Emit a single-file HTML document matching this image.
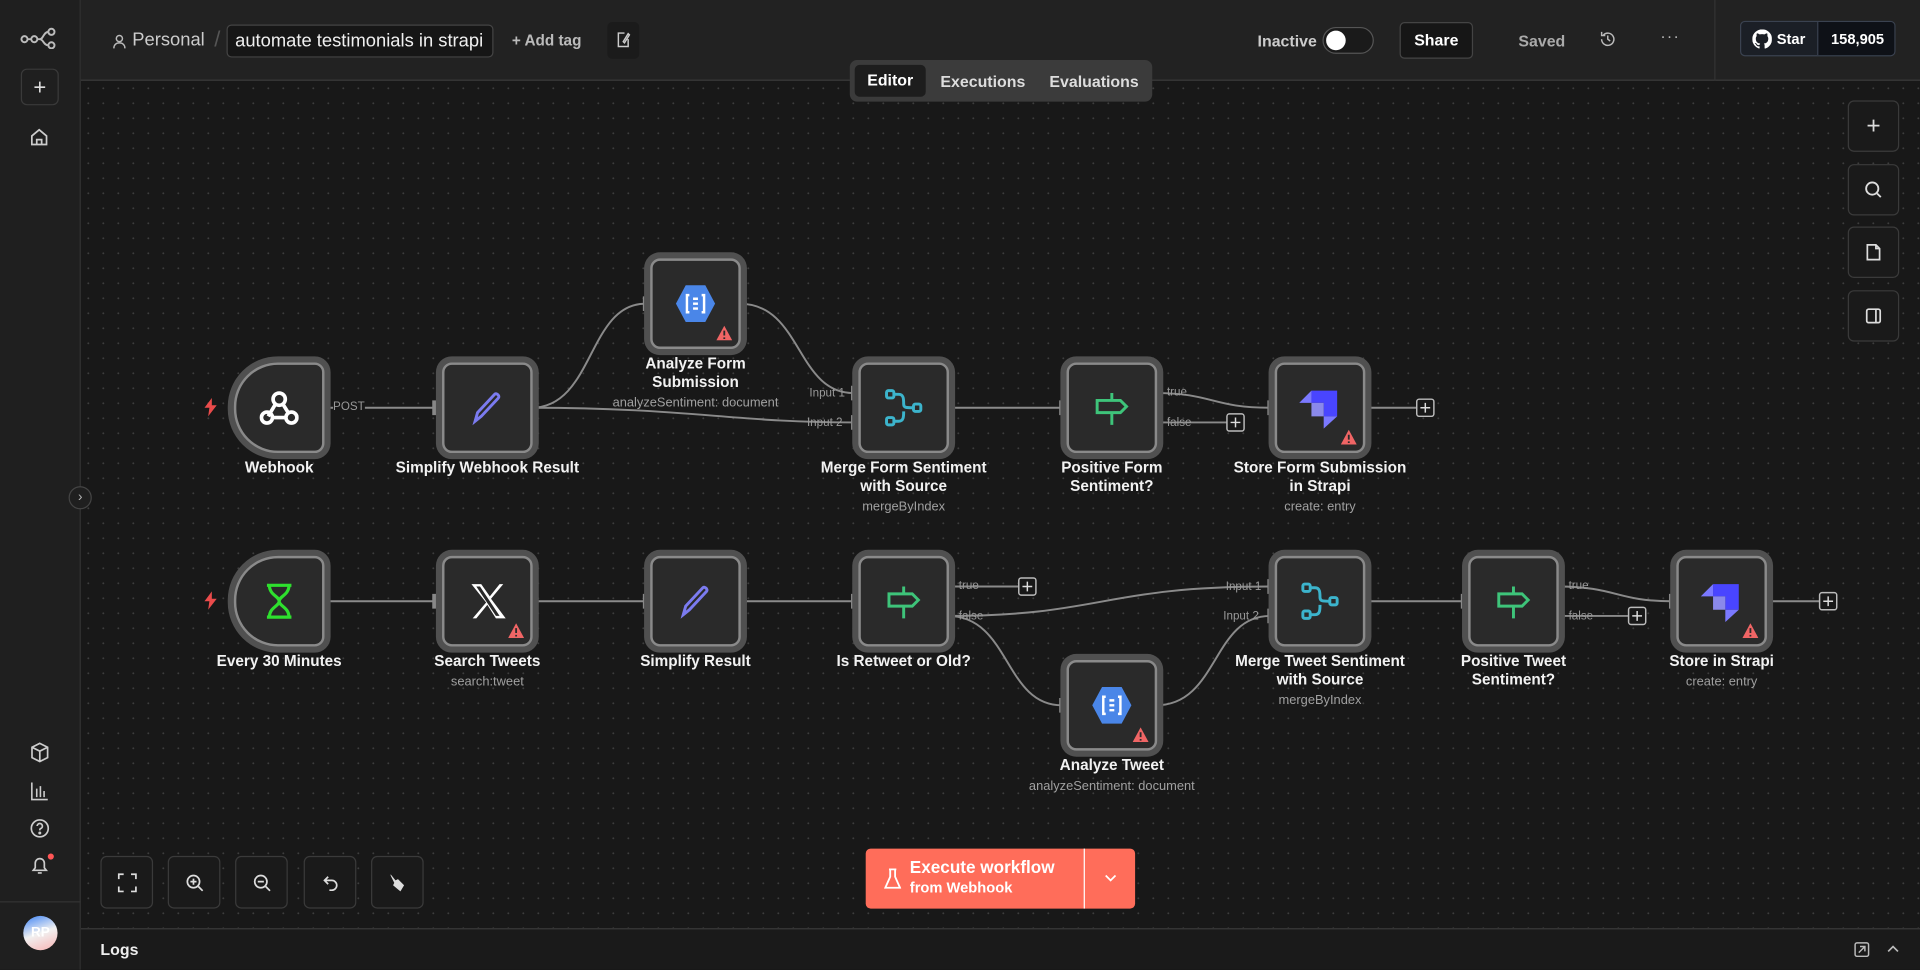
<!DOCTYPE html>
<html><head><meta charset="utf-8"><style>
*{box-sizing:border-box;margin:0;padding:0}
html,body{width:1920px;height:970px;overflow:hidden;background:#181818;font-family:"Liberation Sans",sans-serif}
#w{position:absolute;left:0;top:0;width:1568px;height:792px;transform:scale(1.22449);transform-origin:0 0;background:#181818;overflow:hidden}
.abs{position:absolute}
#side{left:0;top:0;width:66px;height:792px;background:#1f1f1f;border-right:1px solid #333}
#hdr{left:66px;top:0;width:1502px;height:66px;background:#222;border-bottom:1px solid #3a3a3a}
#canvas{left:66px;top:66px;width:1502px;height:692px;background-color:#181818;background-image:radial-gradient(circle,#3d3d3d 0.7px,transparent 0.9px);background-size:12.25px 12.25px}
.node{position:absolute;width:74px;height:74px;background:#2a2a2a;border:2px solid #8a8a8a;border-radius:8px;box-shadow:0 0 0 5px #505050;display:flex;align-items:center;justify-content:center}
.trig{border-radius:36px 8px 8px 36px}
.lbl{position:absolute;width:220px;text-align:center;color:#f2f2f2;font-weight:bold;font-size:12.5px;line-height:15px}
.sub{display:block;font-weight:normal;color:#a0a0a0;font-size:10.5px;margin-top:2px}
.warn{position:absolute;right:5px;bottom:5px}
.btn{position:absolute;border:1px solid #3a3a3a;border-radius:5px;background:#1a1a1a;display:flex;align-items:center;justify-content:center}
.t{color:#ddd;font-size:14px}
</style></head><body><div id="w">
<div id="canvas" class="abs"></div>
<div id="side" class="abs">
 <svg class="abs" style="left:16px;top:22px" width="32" height="18" viewBox="0 0 32 18"><g fill="none" stroke="#bbb" stroke-width="1.6"><circle cx="4" cy="10" r="2.5"/><circle cx="12" cy="10" r="2.5"/><circle cx="26" cy="4" r="2.5"/><circle cx="26" cy="15" r="2.5"/><path d="M6.5 10h3M14.5 10h2c3 0 3-6 7-6M16.5 10c3 0 3 5 7 5"/></g></svg>
 <div class="btn" style="left:17px;top:56px;width:31px;height:30px;background:#1f1f1f"><span style="color:#ddd;font-size:18px">+</span></div>
 <svg class="abs" style="left:24px;top:104px" width="16" height="16" viewBox="0 0 16 16" fill="none" stroke="#ccc" stroke-width="1.4"><path d="M2 7l6-5 6 5v7H2z M6 14v-4h4v4"/></svg>
 <svg class="abs" style="left:24px;top:606px" width="17" height="17" viewBox="0 0 16 16" fill="none" stroke="#ccc" stroke-width="1.3"><path d="M8 1l6 3v8l-6 3-6-3V4z M2 4l6 3 6-3 M8 7v8"/></svg>
 <svg class="abs" style="left:24px;top:638px" width="16" height="16" viewBox="0 0 16 16" fill="none" stroke="#ccc" stroke-width="1.3"><path d="M2 1v14h13 M6 13V6 M9 13V4 M12 13V8"/></svg>
 <svg class="abs" style="left:24px;top:668px" width="17" height="17" viewBox="0 0 16 16" fill="none" stroke="#ccc" stroke-width="1.3"><circle cx="8" cy="8" r="6.5"/><path d="M6 6.2a2 2 0 1 1 2.5 2c-.5.2-.5.6-.5 1.3"/><circle cx="8" cy="11.6" r=".5" fill="#ccc"/></svg>
 <svg class="abs" style="left:24px;top:698px" width="17" height="17" viewBox="0 0 16 16" fill="none" stroke="#ccc" stroke-width="1.3"><path d="M3 12h10l-1.5-2V6.5a3.5 3.5 0 0 0-7 0V10z M6.5 14h3"/></svg>
 <div class="abs" style="left:39px;top:697px;width:5px;height:5px;border-radius:50%;background:#f55"></div>
 <div class="abs" style="left:0;top:736px;width:66px;height:1px;background:#333"></div>
 <div class="abs" style="left:19px;top:748px;width:28px;height:28px;border-radius:50%;background:linear-gradient(160deg,#3b82f6,#f1f1f1 50%,#f8b4b4);color:#fff;font-size:11px;font-weight:bold;text-align:center;line-height:28px">RP</div>
</div>
<div class="abs" style="left:56px;top:397px;width:19px;height:19px;border-radius:50%;background:#1f1f1f;border:1px solid #444;color:#bbb;font-size:11px;text-align:center;line-height:16px">›</div>
<div id="hdr" class="abs">
 <svg class="abs" style="left:26px;top:28px" width="11" height="12" viewBox="0 0 11 12" fill="none" stroke="#bbb" stroke-width="1.2"><circle cx="5.5" cy="3.5" r="2.5"/><path d="M1 11.5c0-3 2-4.5 4.5-4.5s4.5 1.5 4.5 4.5"/></svg>
 <span class="abs" style="left:42px;top:24px;color:#ccc;font-size:15px">Personal</span>
 <span class="abs" style="left:109px;top:22px;color:#555;font-size:18px">/</span>
 <div class="abs" style="left:119px;top:20px;width:218px;height:27px;border:1px solid #444;border-radius:4px;background:#161616;color:#f0f0f0;font-size:15px;line-height:25px;padding-left:6px">automate testimonials in strapi</div>
 <span class="abs" style="left:352px;top:26px;color:#bbb;font-size:12.5px;font-weight:bold">+ Add tag</span>
 <div class="abs" style="left:430px;top:18px;width:26px;height:30px;background:#1b1b1b;border-radius:4px"></div>
 <svg class="abs" style="left:437px;top:26px" width="12" height="13" viewBox="0 0 12 13" fill="none" stroke="#ccc" stroke-width="1.2"><path d="M7 1H2v11h8V6 M6 8l4-6.5 1 1-4 6.5z"/></svg>
 <span class="abs" style="left:961px;top:26px;color:#ccc;font-size:13px;font-weight:bold">Inactive</span>
 <div class="abs" style="left:1014px;top:22px;width:42px;height:22px;border-radius:11px;background:#1a1a1a;border:1px solid #555"><div style="position:absolute;left:2px;top:2px;width:16px;height:16px;border-radius:50%;background:#fff"></div></div>
 <div class="abs" style="left:1077px;top:18px;width:60px;height:30px;border:1px solid #444;border-radius:4px;background:#161616;color:#fff;font-size:13px;font-weight:bold;text-align:center;line-height:28px">Share</div>
 <span class="abs" style="left:1174px;top:26px;color:#aaa;font-size:13px;font-weight:bold">Saved</span>
 <svg class="abs" style="left:1240px;top:25px" width="14" height="14" viewBox="0 0 14 14" fill="none" stroke="#bbb" stroke-width="1.2"><path d="M2 7a5 5 0 1 0 1.5-3.5 M2 1v3h3 M7 4v3l2 1.5"/></svg>
 <span class="abs" style="left:1290px;top:22px;color:#bbb;font-size:13px;letter-spacing:1px">···</span>
 <div class="abs" style="left:1334px;top:0;width:1px;height:66px;background:#333"></div>
 <div class="abs" style="left:1355px;top:17px;width:127px;height:29px;border:1px solid #3a4250;border-radius:4px;background:#1b1f26;overflow:hidden">
  <svg class="abs" style="left:9px;top:6px" width="16" height="16" viewBox="0 0 16 16"><path fill="#fff" d="M8 0a8 8 0 0 0-2.5 15.6c.4 0 .5-.2.5-.4v-1.4c-2.2.5-2.7-1-2.7-1-.4-.9-.9-1.2-.9-1.2-.7-.5.1-.5.1-.5.8.1 1.2.8 1.2.8.7 1.3 1.9.9 2.3.7.1-.5.3-.9.5-1.1-1.8-.2-3.6-.9-3.6-4 0-.9.3-1.6.8-2.1-.1-.2-.4-1 .1-2.1 0 0 .7-.2 2.2.8a7.5 7.5 0 0 1 4 0c1.5-1 2.2-.8 2.2-.8.4 1.1.2 1.9.1 2.1.5.6.8 1.3.8 2.1 0 3.1-1.9 3.8-3.6 4 .3.3.6.8.6 1.5v2.2c0 .2.1.5.6.4A8 8 0 0 0 8 0z"/></svg>
  <span class="abs" style="left:29px;top:7px;color:#fff;font-size:12px;font-weight:bold">Star</span>
  <div class="abs" style="left:62px;top:0;width:65px;height:29px;background:#0e1117;border-left:1px solid #3a4250;color:#fff;font-size:12px;font-weight:bold;text-align:center;line-height:28px">158,905</div>
 </div>
</div>
<div class="abs" style="left:694px;top:49px;width:247px;height:34px;background:#3b3b3b;border-radius:6px">
 <div class="abs" style="left:4px;top:4px;width:58px;height:26px;background:#1d1d1d;border-radius:4px;color:#fff;font-size:13px;font-weight:bold;text-align:center;line-height:26px">Editor</div>
 <span class="abs" style="left:74px;top:10px;color:#ddd;font-size:13px;font-weight:bold">Executions</span>
 <span class="abs" style="left:163px;top:10px;color:#ddd;font-size:13px;font-weight:bold">Evaluations</span>
</div>
<!-- right toolbar -->
<div class="btn" style="left:1509px;top:82px;width:42px;height:42px"><span style="color:#ddd;font-size:20px">+</span></div>
<div class="btn" style="left:1509px;top:134px;width:42px;height:42px"><svg width="16" height="16" viewBox="0 0 16 16" fill="none" stroke="#ddd" stroke-width="1.5"><circle cx="7" cy="7" r="5"/><path d="M11 11l3 3"/></svg></div>
<div class="btn" style="left:1509px;top:185px;width:42px;height:42px"><svg width="16" height="16" viewBox="0 0 16 16" fill="none" stroke="#ddd" stroke-width="1.4"><path d="M3 2h7l3 3v9H3z M10 2v3h3"/></svg></div>
<div class="btn" style="left:1509px;top:237px;width:42px;height:42px"><svg width="16" height="16" viewBox="0 0 16 16" fill="none" stroke="#ddd" stroke-width="1.4"><rect x="2.5" y="2.5" width="11" height="11" rx="1.5"/><path d="M10 2.5v11"/></svg></div>
<!-- edges -->
<svg class="abs" style="left:0;top:0" width="1568" height="792" fill="none" stroke="#8a8a8a" stroke-width="1.6">
<path d="M264 333H355"/><path d="M434 333C485 333 480 248 527 248"/><path d="M434 333C560 333 600 345 697 345"/><path d="M604 248C655 248 650 321 697 321"/>
<path d="M774 333H867"/><path d="M944 321C990 321 990 333 1037 333"/><path d="M944 345H1003"/><path d="M1114 333H1157"/>
<path d="M264 491H355"/><path d="M434 491H527"/><path d="M604 491H697"/><path d="M774 479H833"/>
<path d="M774 503C900 503 900 479 1037 479"/><path d="M774 503C825 503 820 576 867 576"/><path d="M944 576C995 576 990 503 1037 503"/>
<path d="M1114 491H1195"/><path d="M1272 479C1320 479 1320 491 1365 491"/><path d="M1272 503H1331"/><path d="M1442 491H1487"/>
<g fill="#181818" stroke="#bbb" stroke-width="1.2"><rect x="1002" y="338" width="14" height="14" rx="2"/><rect x="1157" y="326" width="14" height="14" rx="2"/><rect x="832" y="472" width="14" height="14" rx="2"/><rect x="1330" y="496" width="14" height="14" rx="2"/><rect x="1486" y="484" width="14" height="14" rx="2"/></g>
<g stroke="#ddd" stroke-width="1.2"><path d="M1009 341v8M1005 345h8M1164 329v8M1160 333h8M839 475v8M835 479h8M1337 499v8M1333 503h8M1493 487v8M1489 491h8"/></g>
<g fill="#888" stroke="none">
<circle cx="264" cy="333" r="6"/><circle cx="434" cy="333" r="6"/><circle cx="604" cy="248" r="6"/><circle cx="774" cy="333" r="6"/><circle cx="944" cy="321" r="6"/><circle cx="944" cy="345" r="6"/><circle cx="1114" cy="333" r="6"/>
<circle cx="264" cy="491" r="6"/><circle cx="434" cy="491" r="6"/><circle cx="604" cy="491" r="6"/><circle cx="774" cy="479" r="6"/><circle cx="774" cy="503" r="6"/><circle cx="944" cy="576" r="6"/><circle cx="1114" cy="491" r="6"/><circle cx="1272" cy="479" r="6"/><circle cx="1272" cy="503" r="6"/><circle cx="1442" cy="491" r="6"/>
<path d="M353 327v12h6v-12zM525 242v12h6v-12zM695 315v12h6v-12zM695 339v12h6v-12zM865 327v12h6v-12zM1035 327v12h6v-12zM353 485v12h6v-12zM525 485v12h6v-12zM695 485v12h6v-12zM865 570v12h6v-12zM1035 473v12h6v-12zM1035 497v12h6v-12zM1193 485v12h6v-12zM1363 485v12h6v-12z"/>
</g></svg>
<div class="abs" style="left:272px;top:327px;color:#999;font-size:9.5px;background:#181818">POST</div>
<div class="abs" style="left:661px;top:316px;color:#999;font-size:9.5px">Input 1</div>
<div class="abs" style="left:659px;top:340px;color:#999;font-size:9.5px">Input 2</div>
<div class="abs" style="left:953px;top:315px;color:#999;font-size:9.5px">true</div>
<div class="abs" style="left:953px;top:340px;color:#999;font-size:9.5px">false</div>
<div class="abs" style="left:783px;top:473px;color:#999;font-size:9.5px">true</div>
<div class="abs" style="left:783px;top:498px;color:#999;font-size:9.5px">false</div>
<div class="abs" style="left:1001px;top:474px;color:#999;font-size:9.5px">Input 1</div>
<div class="abs" style="left:999px;top:498px;color:#999;font-size:9.5px">Input 2</div>
<div class="abs" style="left:1281px;top:473px;color:#999;font-size:9.5px">true</div>
<div class="abs" style="left:1281px;top:498px;color:#999;font-size:9.5px">false</div>
<!-- trigger bolts -->
<svg class="abs" style="left:167px;top:325px" width="10" height="15" viewBox="0 0 10 15"><path fill="#ea4b4b" d="M6 0L0 8h4l-1 7 7-9H6z"/></svg>
<svg class="abs" style="left:167px;top:483px" width="10" height="15" viewBox="0 0 10 15"><path fill="#ea4b4b" d="M6 0L0 8h4l-1 7 7-9H6z"/></svg>
<!-- nodes row 1 -->
<div class="node trig" style="left:191px;top:296px"><svg width="32" height="30" viewBox="0 0 32 30" fill="none" stroke="#fff" stroke-width="3"><circle cx="16" cy="8" r="5"/><circle cx="6" cy="23" r="4.5"/><circle cx="26" cy="23" r="4.5"/><path d="M13 12l-6 10 M19 12l5 8 M10 23h12"/></svg></div>
<div class="lbl" style="left:118px;top:375px">Webhook</div>
<div class="node" style="left:361px;top:296px"><svg width="30" height="30" viewBox="0 0 30 30" fill="none" stroke="#7b7bf0" stroke-width="2.4"><path d="M5 26l2-7L21 4c1.5-1.5 4.5 1.5 3 3L10 22z"/></svg></div>
<div class="lbl" style="left:288px;top:375px">Simplify Webhook Result</div>
<div class="node" style="left:531px;top:211px"><svg width="34" height="32" viewBox="0 0 34 32"><path fill="#4a86e8" d="M9 1h16l8 15-8 15H9L1 16z"/><g stroke="#fff" stroke-width="2" fill="none"><path d="M12 9h-2v14h2M22 9h2v14h-2M15 12h4M15 16h4M15 20h4"/></g></svg>
 <svg class="warn" width="13" height="12" viewBox="0 0 13 12"><path fill="#f06565" d="M6.5 0L13 12H0z"/><path stroke="#2a2a2a" stroke-width="1.5" d="M6.5 4v4M6.5 9.5v1.3"/></svg></div>
<div class="lbl" style="left:458px;top:290px">Analyze Form<br>Submission<span class="sub">analyzeSentiment: document</span></div>
<div class="node" style="left:701px;top:296px"><svg width="34" height="32" viewBox="0 0 34 32" fill="none" stroke="#3cb4cc" stroke-width="2.4"><rect x="3" y="2" width="6" height="6" rx="1.5"/><rect x="3" y="24" width="6" height="6" rx="1.5"/><rect x="25" y="13" width="6" height="6" rx="1.5"/><path d="M9 5h4c4 0 4 4 4 8v0c0 3 2 3 8 3M9 27h4c4 0 4-4 4-8"/></svg></div>
<div class="lbl" style="left:628px;top:375px">Merge Form Sentiment<br>with Source<span class="sub">mergeByIndex</span></div>
<div class="node" style="left:871px;top:296px"><svg width="32" height="32" viewBox="0 0 32 32" fill="none" stroke="#3ec47a" stroke-width="2.4"><path d="M4 10h19l5 5-5 5H4z M16 4v6 M16 20v10"/></svg></div>
<div class="lbl" style="left:798px;top:375px">Positive Form<br>Sentiment?</div>
<div class="node" style="left:1041px;top:296px"><svg width="34" height="34" viewBox="0 0 34 34"><path fill="#4945ff" d="M10 3h21v21H20V13H10z"/><path fill="#9593ff" d="M10 13h10v11H10z" opacity=".9"/><path fill="#7b79ff" d="M20 24h11l-11 10z"/><path fill="#7b79ff" d="M10 3v10H0z"/></svg>
 <svg class="warn" width="13" height="12" viewBox="0 0 13 12"><path fill="#f06565" d="M6.5 0L13 12H0z"/><path stroke="#2a2a2a" stroke-width="1.5" d="M6.5 4v4M6.5 9.5v1.3"/></svg></div>
<div class="lbl" style="left:968px;top:375px">Store Form Submission<br>in Strapi<span class="sub">create: entry</span></div>
<!-- row 2 -->
<div class="node trig" style="left:191px;top:454px"><svg width="26" height="30" viewBox="0 0 26 30" fill="none" stroke="#2ee02e" stroke-width="2.6"><path d="M3 2h20M3 28h20M5 2c0 8 8 9 8 13s-8 5-8 13M21 2c0 8-8 9-8 13s8 5 8 13"/></svg></div>
<div class="lbl" style="left:118px;top:533px">Every 30 Minutes</div>
<div class="node" style="left:361px;top:454px"><svg width="30" height="30" viewBox="0 0 30 30"><path fill="#fff" d="M2 1h8l7 10 8-10h3l-10 12 12 16h-8l-7-11-9 11H3l11-13z M6 3l16 24h3L9 3z" fill-rule="evenodd"/></svg>
 <svg class="warn" width="13" height="12" viewBox="0 0 13 12"><path fill="#f06565" d="M6.5 0L13 12H0z"/><path stroke="#2a2a2a" stroke-width="1.5" d="M6.5 4v4M6.5 9.5v1.3"/></svg></div>
<div class="lbl" style="left:288px;top:533px">Search Tweets<span class="sub">search:tweet</span></div>
<div class="node" style="left:531px;top:454px"><svg width="30" height="30" viewBox="0 0 30 30" fill="none" stroke="#7b7bf0" stroke-width="2.4"><path d="M5 26l2-7L21 4c1.5-1.5 4.5 1.5 3 3L10 22z"/></svg></div>
<div class="lbl" style="left:458px;top:533px">Simplify Result</div>
<div class="node" style="left:701px;top:454px"><svg width="32" height="32" viewBox="0 0 32 32" fill="none" stroke="#3ec47a" stroke-width="2.4"><path d="M4 10h19l5 5-5 5H4z M16 4v6 M16 20v10"/></svg></div>
<div class="lbl" style="left:628px;top:533px">Is Retweet or Old?</div>
<div class="node" style="left:871px;top:539px"><svg width="34" height="32" viewBox="0 0 34 32"><path fill="#4a86e8" d="M9 1h16l8 15-8 15H9L1 16z"/><g stroke="#fff" stroke-width="2" fill="none"><path d="M12 9h-2v14h2M22 9h2v14h-2M15 12h4M15 16h4M15 20h4"/></g></svg>
 <svg class="warn" width="13" height="12" viewBox="0 0 13 12"><path fill="#f06565" d="M6.5 0L13 12H0z"/><path stroke="#2a2a2a" stroke-width="1.5" d="M6.5 4v4M6.5 9.5v1.3"/></svg></div>
<div class="lbl" style="left:798px;top:618px">Analyze Tweet<span class="sub">analyzeSentiment: document</span></div>
<div class="node" style="left:1041px;top:454px"><svg width="34" height="32" viewBox="0 0 34 32" fill="none" stroke="#3cb4cc" stroke-width="2.4"><rect x="3" y="2" width="6" height="6" rx="1.5"/><rect x="3" y="24" width="6" height="6" rx="1.5"/><rect x="25" y="13" width="6" height="6" rx="1.5"/><path d="M9 5h4c4 0 4 4 4 8v0c0 3 2 3 8 3M9 27h4c4 0 4-4 4-8"/></svg></div>
<div class="lbl" style="left:968px;top:533px">Merge Tweet Sentiment<br>with Source<span class="sub">mergeByIndex</span></div>
<div class="node" style="left:1199px;top:454px"><svg width="32" height="32" viewBox="0 0 32 32" fill="none" stroke="#3ec47a" stroke-width="2.4"><path d="M4 10h19l5 5-5 5H4z M16 4v6 M16 20v10"/></svg></div>
<div class="lbl" style="left:1126px;top:533px">Positive Tweet<br>Sentiment?</div>
<div class="node" style="left:1369px;top:454px"><svg width="34" height="34" viewBox="0 0 34 34"><path fill="#4945ff" d="M10 3h21v21H20V13H10z"/><path fill="#9593ff" d="M10 13h10v11H10z" opacity=".9"/><path fill="#7b79ff" d="M20 24h11l-11 10z"/><path fill="#7b79ff" d="M10 3v10H0z"/></svg>
 <svg class="warn" width="13" height="12" viewBox="0 0 13 12"><path fill="#f06565" d="M6.5 0L13 12H0z"/><path stroke="#2a2a2a" stroke-width="1.5" d="M6.5 4v4M6.5 9.5v1.3"/></svg></div>
<div class="lbl" style="left:1296px;top:533px">Store in Strapi<span class="sub">create: entry</span></div>
<!-- bottom controls -->
<div class="btn" style="left:82px;top:699px;width:43px;height:43px"><svg width="16" height="16" viewBox="0 0 16 16" fill="none" stroke="#ddd" stroke-width="1.4"><path d="M1 5V1h4M11 1h4v4M15 11v4h-4M5 15H1v-4"/></svg></div>
<div class="btn" style="left:137px;top:699px;width:43px;height:43px"><svg width="16" height="16" viewBox="0 0 16 16" fill="none" stroke="#ddd" stroke-width="1.4"><circle cx="7" cy="7" r="5"/><path d="M11 11l3.5 3.5M7 4.5v5M4.5 7h5"/></svg></div>
<div class="btn" style="left:192px;top:699px;width:43px;height:43px"><svg width="16" height="16" viewBox="0 0 16 16" fill="none" stroke="#ddd" stroke-width="1.4"><circle cx="7" cy="7" r="5"/><path d="M11 11l3.5 3.5M4.5 7h5"/></svg></div>
<div class="btn" style="left:248px;top:699px;width:43px;height:43px"><svg width="16" height="16" viewBox="0 0 16 16" fill="none" stroke="#ddd" stroke-width="1.4"><path d="M6 3L3 6l3 3M3 6h6a4 4 0 0 1 0 8H7"/></svg></div>
<div class="btn" style="left:303px;top:699px;width:43px;height:43px"><svg width="16" height="16" viewBox="0 0 16 16"><path fill="#ddd" d="M2 1l4 5 2-1 5 5-3 5-6-5 1-2-3-6z"/></svg></div>
<div class="abs" style="left:707px;top:693px;width:220px;height:49px;background:#ff6d5a;border-radius:4px">
 <svg class="abs" style="left:15px;top:16px" width="14" height="18" viewBox="0 0 14 18" fill="none" stroke="#fff" stroke-width="1.5"><path d="M4 1h6M5 1v6L1 16h12L9 7V1"/></svg>
 <div class="abs" style="left:36px;top:7px;color:#fff;font-size:14px;font-weight:bold">Execute workflow</div>
 <div class="abs" style="left:36px;top:25px;color:#fff;font-size:12px;font-weight:bold">from Webhook</div>
 <div class="abs" style="left:178px;top:0;width:1px;height:49px;background:#fff"></div>
 <svg class="abs" style="left:195px;top:20px" width="10" height="8" viewBox="0 0 10 8" fill="none" stroke="#fff" stroke-width="1.4"><path d="M1 2l4 4 4-4"/></svg>
</div>
<!-- logs -->
<div class="abs" style="left:66px;top:758px;width:1502px;height:34px;background:#1a1a1a;border-top:1px solid #3a3a3a">
 <span class="abs" style="left:16px;top:9px;color:#eee;font-size:13px;font-weight:bold">Logs</span>
 <svg class="abs" style="left:1448px;top:10px" width="13" height="13" viewBox="0 0 13 13" fill="none" stroke="#bbb" stroke-width="1.2"><rect x="1" y="1" width="11" height="11" rx="1.5"/><path d="M4 9l5-5M5 4h4v4"/></svg>
 <svg class="abs" style="left:1475px;top:12px" width="10" height="8" viewBox="0 0 10 8" fill="none" stroke="#bbb" stroke-width="1.4"><path d="M1 6l4-4 4 4"/></svg>
</div>
</div></body></html>
